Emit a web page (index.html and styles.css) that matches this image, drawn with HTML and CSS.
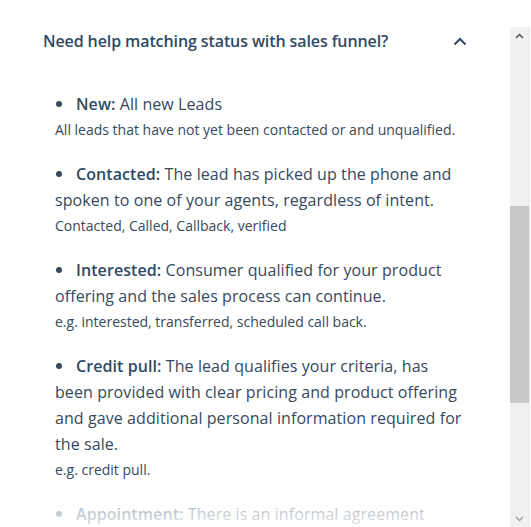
FILE: index.html
```html
<!DOCTYPE html>
<html>
<head>
<meta charset="utf-8">
<link rel="stylesheet" href="styles.css">
</head>
<body>
<div class="page">
  <main class="content">
    <div class="header">
      <h2 class="title">Need help matching status with sales funnel?</h2>
      <svg class="chev" width="14" height="9" viewBox="0 0 14 9"><path d="M1.5 7.5 L7 2 L12.5 7.5" fill="none" stroke="#2f4a63" stroke-width="2"/></svg>
    </div>
    <ul class="list">
      <li class="item">
        <p class="desc"><span class="dot"></span><b>New:</b> All new Leads</p>
        <p class="ex">All leads that have not yet been contacted or and unqualified.</p>
      </li>
      <li class="item">
        <p class="desc"><span class="dot"></span><b>Contacted:</b> The lead has picked up the phone and spoken to one of your agents, regardless of intent.</p>
        <p class="ex">Contacted, Called, Callback, verified</p>
      </li>
      <li class="item">
        <p class="desc"><span class="dot"></span><b>Interested:</b> Consumer qualified for your product offering and the sales process can continue.</p>
        <p class="ex">e.g. interested, transferred, scheduled call back.</p>
      </li>
      <li class="item">
        <p class="desc"><span class="dot"></span><b>Credit pull:</b> The lead qualifies your criteria, has been provided with clear pricing and product offering and gave additional personal information required for the sale.</p>
        <p class="ex">e.g. credit pull.</p>
      </li>
      <li class="item">
        <p class="desc"><span class="dot"></span><b>Appointment:</b> There is an informal agreement between the lead and the agent.</p>
        <p class="ex">e.g. appointment set.</p>
      </li>
    </ul>
    <div class="fade"></div>
  </main>
  <div class="scrollbar">
    <div class="arrow up"><svg width="9" height="6" viewBox="0 0 9 6"><path d="M1 5 L4.5 1.5 L8 5" fill="none" stroke="#505050" stroke-width="1.5"/></svg></div>
    <div class="track">
      <div class="pre"></div>
      <div class="thumb"></div>
    </div>
    <div class="arrow down"><svg width="9" height="6" viewBox="0 0 9 6"><path d="M1 1 L4.5 4.5 L8 1" fill="none" stroke="#a3a3a3" stroke-width="1.5"/></svg></div>
  </div>
</div>
</body>
</html>
```
FILE: styles.css
```css
html, body {
  margin: 0;
  padding: 0;
  background: #ffffff;
  height: 100%;
  overflow: hidden;
}
.page {
  display: flex;
  width: 531px;
  height: 527px;
  font-family: "Open Sans", "Liberation Sans", sans-serif;
  color: #36495d;
}
.content {
  position: relative;
  width: 510px;
  height: 527px;
  overflow: hidden;
}
.header {
  display: flex;
  align-items: center;
  justify-content: space-between;
  padding: 28px 0 0 43px;
  width: 424px;
  height: 26px;
}
.title {
  margin: 0;
  font-size: 16px;
  font-weight: 600;
  color: #2f4a63;
  line-height: 26px;
  letter-spacing: -0.1px;
}
.chev {
  display: block;
}
.list {
  list-style: none;
  margin: 0;
  padding: 37px 0 0 55px;
  width: 410px;
}
.item {
  margin: 0 0 18px 0;
}
.desc {
  margin: 0;
  font-size: 16px;
  line-height: 26px;
  letter-spacing: 0.08px;
  color: #36495d;
}
.desc b {
  font-weight: 600;
  color: #2f4a63;
}
.dot {
  display: inline-block;
  width: 6px;
  height: 6px;
  border-radius: 50%;
  background: #36495d;
  margin: 0 14px 0 1px;
  vertical-align: 3px;
}
.ex {
  margin: 0;
  font-size: 14px;
  line-height: 26px;
  color: #36495d;
}
.fade {
  position: absolute;
  left: 0;
  right: 0;
  bottom: 0;
  height: 40px;
  background: linear-gradient(to bottom, rgba(255,255,255,0.45), rgba(255,255,255,0.85));
}
.scrollbar {
  margin-top: 27px;
  width: 19px;
  height: 500px;
  background: #f1f1f1;
  display: flex;
  flex-direction: column;
  border-right: 1px solid #e8e8e8;
}
.arrow {
  height: 17px;
  display: flex;
  align-items: center;
  justify-content: center;
}
.track {
  flex: 1;
  display: flex;
  flex-direction: column;
}
.pre {
  height: 162px;
}
.thumb {
  height: 197px;
  background: #c9c9c9;
}
```
